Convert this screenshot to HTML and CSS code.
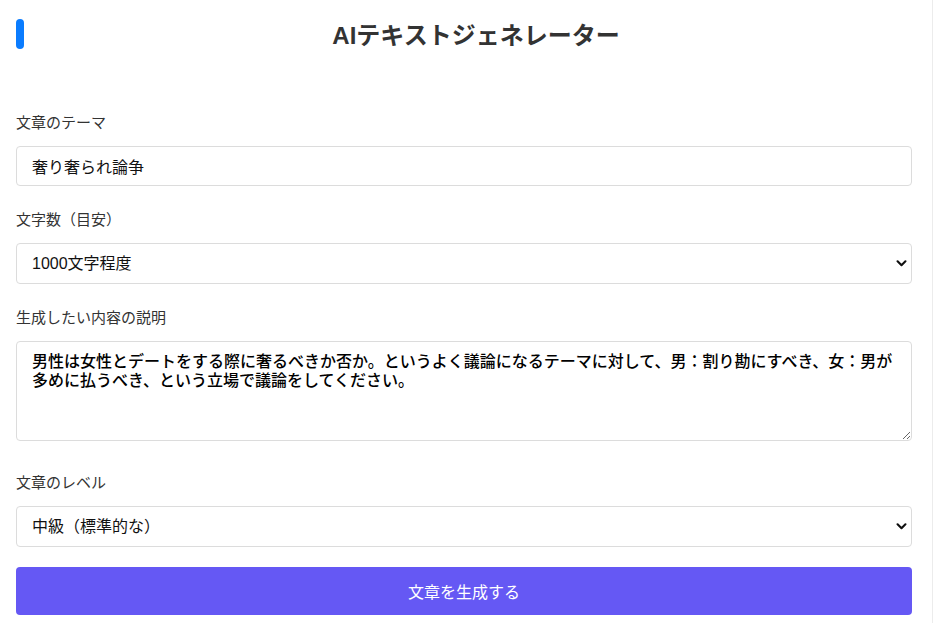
FILE: index.html
```html
<!DOCTYPE html>
<html lang="ja">
<head>
<meta charset="utf-8">
<title>AIテキストジェネレーター</title>
<link rel="stylesheet" href="styles.css">
</head>
<body>
<div class="page">
  <header class="header">
    <span class="header-bar"></span>
    <h1 class="title">AIテキストジェネレーター</h1>
  </header>
  <form class="form">
    <div class="field">
      <label class="label" for="theme">文章のテーマ</label>
      <input class="control" id="theme" type="text" value="奢り奢られ論争">
    </div>
    <div class="field">
      <label class="label" for="length">文字数（目安）</label>
      <select class="control control-select" id="length">
        <option>1000文字程度</option>
      </select>
    </div>
    <div class="field field-textarea">
      <label class="label" for="desc">生成したい内容の説明</label>
      <textarea class="control control-textarea" id="desc">男性は女性とデートをする際に奢るべきか否か。というよく議論になるテーマに対して、男：割り勘にすべき、女：男が多めに払うべき、という立場で議論をしてください。</textarea>
    </div>
    <div class="field field-last">
      <label class="label" for="level">文章のレベル</label>
      <select class="control control-select" id="level">
        <option>中級（標準的な）</option>
      </select>
    </div>
    <button class="submit" type="button">文章を生成する</button>
  </form>
</div>
</body>
</html>
```
FILE: styles.css
```css
* { box-sizing: border-box; }
html, body { margin: 0; padding: 0; background: #fff; }
body {
  font-family: "Liberation Sans", "Noto Sans CJK JP", sans-serif;
  color: #333;
}
.page {
  width: 933px;
  height: 623px;
  overflow: hidden;
  border-right: 1px solid #ececec;
  padding: 0 20px 0 16px;
}
.header {
  display: flex;
  align-items: flex-start;
  padding-top: 19px;
  margin-bottom: 61px;
}
.header-bar {
  width: 8px;
  height: 30px;
  border-radius: 4px;
  background: #0a7cff;
  flex: none;
}
.title {
  flex: 1;
  margin: 0 -16px 0 0;
  padding-top: 2px;
  text-align: center;
  font-size: 24px;
  line-height: 30px;
  font-weight: 700;
  color: #333;
}
.form { display: flex; flex-direction: column; }
.field { display: flex; flex-direction: column; margin-bottom: 23px; }
.field-textarea { margin-bottom: 31px; }
.field-last { margin-bottom: 20px; }
.label {
  font-size: 15px;
  line-height: 22px;
  color: #333;
  margin-bottom: 12px;
}
.control {
  width: 100%;
  height: 40px;
  border: 1px solid #dcdcdc;
  border-radius: 4px;
  padding: 0 15px;
  font-family: inherit;
  font-size: 16px;
  color: #111;
  background: #fff;
  outline: none;
}
.control-select {
  appearance: none;
  -webkit-appearance: none;
  height: 41px;
  background-image: url("data:image/svg+xml;utf8,<svg xmlns='http://www.w3.org/2000/svg' width='12' height='8' viewBox='0 0 12 8'><path d='M1.5 1.5 6 6 10.5 1.5' fill='none' stroke='%23111' stroke-width='2.4' stroke-linecap='round' stroke-linejoin='round'/></svg>");
  background-repeat: no-repeat;
  background-position: right 4px center;
  background-size: 11px 7px;
}
.control-textarea {
  display: block;
  height: 100px;
  padding: 10px 15px;
  line-height: 19px;
  font-weight: 500;
  color: #000;
  resize: vertical;
}
.submit {
  width: 100%;
  height: 48px;
  border: none;
  border-radius: 4px;
  background: #6558f4;
  color: #fff;
  font-family: inherit;
  font-size: 16px;
  cursor: pointer;
}
```
